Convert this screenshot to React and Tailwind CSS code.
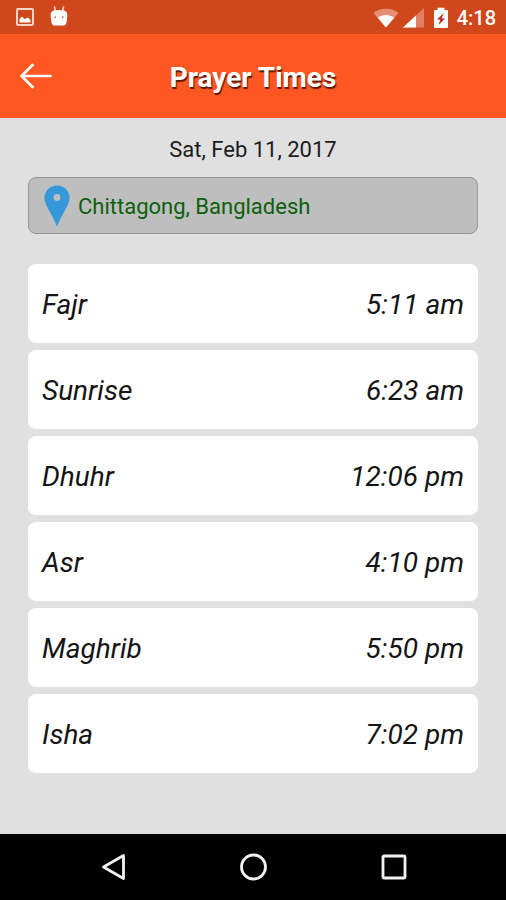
import React from "react";

const prayers = [
  { name: "Fajr", time: "5:11 am" },
  { name: "Sunrise", time: "6:23 am" },
  { name: "Dhuhr", time: "12:06 pm" },
  { name: "Asr", time: "4:10 pm" },
  { name: "Maghrib", time: "5:50 pm" },
  { name: "Isha", time: "7:02 pm" },
];

function StatusBar() {
  return (
    <div className="h-[34px] pl-4 pr-2.5 flex items-center justify-between bg-[#d0471c] text-white">
      {/* Notifications */}
      <div className="flex items-center gap-4">
        <svg width="18" height="18" viewBox="0 0 18 18" fill="none">
          <rect x="1" y="1" width="16" height="16" rx="1" stroke="#fbd5c8" strokeWidth="2" />
          <path d="M3.5 14.5V11L6 8.5L8.5 11L12 9.5L14.5 12V14.5Z" fill="white" />
        </svg>
        <svg width="18" height="22" viewBox="0 0 18 22" fill="none">
          <path d="M4.5 1L5.5 5M13.5 1L12.5 5" stroke="#fbd5c8" strokeWidth="1.6" strokeLinecap="round" />
          <path
            d="M4 4.5C7 3.8 11 3.8 14 4.5C16.5 5 17.6 7 17.3 10L16.6 16C16.4 18.5 15 19.6 12.5 19.6H5.5C3 19.6 1.6 18.5 1.4 16L0.7 10C0.4 7 1.5 5 4 4.5Z"
            fill="white"
          />
          <circle cx="5.2" cy="11.2" r="0.9" fill="#d0674a" />
          <circle cx="12.8" cy="11.2" r="0.9" fill="#d0674a" />
        </svg>
      </div>

      {/* Signal, battery and clock */}
      <div className="flex items-center pt-0.5">
        <svg width="26" height="20" viewBox="0 0 26 20">
          <path d="M0.5 5C7.5 -0.6 18.5 -0.6 25.5 5L13 19.5Z" fill="#e58f76" />
          <path d="M4.8 9.8C9.5 6 16.5 6 21.2 9.8L13 19.5Z" fill="white" />
        </svg>
        <svg width="22" height="20" viewBox="0 0 22 20" className="ml-1">
          <path d="M0 19.5L21 0V19.5Z" fill="#e07f63" />
          <path d="M0 19.5L13 7.5V19.5Z" fill="white" />
        </svg>
        <svg width="16" height="22" viewBox="0 0 16 22" className="ml-2">
          <path d="M4.5 0.8H11.5V3H14Q15 3 15 4V20Q15 21 14 21H2Q1 21 1 20V4Q1 3 2 3H4.5Z" fill="white" />
          <path d="M10.8 6L4 12.2L7.4 12.8L5.4 18L12 11.8L8.7 11.2Z" fill="#b9302a" />
        </svg>
        <span className="ml-2 text-[20px] leading-6 font-medium">4:18</span>
      </div>
    </div>
  );
}

function Header() {
  return (
    <header className="h-[84px] px-5 grid grid-cols-[32px_1fr_32px] items-center bg-[#ff5722]">
      <button type="button" aria-label="Back">
        <svg width="32" height="26" viewBox="0 0 32 26" fill="none">
          <path
            d="M30.5 13H2M12.5 2L1.5 13L12.5 24"
            stroke="white"
            strokeWidth="2.6"
            strokeLinecap="round"
            strokeLinejoin="round"
          />
        </svg>
      </button>
      <h1 className="pt-1 text-center text-[28px] leading-8 font-bold text-white [text-shadow:1px_2px_1px_#5a1a08]">
        Prayer Times
      </h1>
    </header>
  );
}

function NavBar() {
  return (
    <nav className="h-[66px] px-[43px] grid grid-cols-3 bg-black">
      <button type="button" aria-label="Back" className="flex items-center justify-center">
        <svg width="26" height="30" viewBox="0 0 26 30" fill="none">
          <path d="M23.5 3.5V26.5L3.5 15Z" stroke="#f2f2f2" strokeWidth="2.8" strokeLinejoin="round" />
        </svg>
      </button>
      <button type="button" aria-label="Home" className="flex items-center justify-center">
        <svg width="28" height="28" viewBox="0 0 28 28" fill="none">
          <circle cx="14.5" cy="14" r="12" stroke="#f2f2f2" strokeWidth="2.8" />
        </svg>
      </button>
      <button type="button" aria-label="Recent apps" className="flex items-center justify-center">
        <svg width="28" height="26" viewBox="0 0 28 26" fill="none">
          <rect x="4" y="2" width="22" height="22" rx="1" stroke="#f2f2f2" strokeWidth="2.8" />
        </svg>
      </button>
    </nav>
  );
}

export default function App() {
  return (
    <div className="min-h-screen flex flex-col bg-[#e0e0e0] font-[Roboto,sans-serif]">
      <StatusBar />
      <Header />

      <main className="flex-1 px-7 pt-[18px]">
        <p className="text-center text-[22px] leading-7 text-[#1c1c1c]">Sat, Feb 11, 2017</p>

        {/* Location */}
        <button
          type="button"
          className="mt-[13px] w-full h-[57px] px-[15px] flex items-center gap-2 rounded-lg border border-[#959595] bg-[#bebebe] text-[22px] leading-7 text-[#0b600b]"
        >
          <svg width="26" height="42" viewBox="0 0 26 42">
            <path
              fillRule="evenodd"
              d="M13 0.5C20 0.5 25.5 5.8 25.5 12.8C25.5 20 19 27 13 41.5C7 27 0.5 20 0.5 12.8C0.5 5.8 6 0.5 13 0.5ZM13 9A3.4 3.4 0 1 0 13 15.8A3.4 3.4 0 1 0 13 9Z"
              fill="#3498db"
            />
          </svg>
          <span className="pt-0.5">Chittagong, Bangladesh</span>
        </button>

        {/* Times */}
        <ul className="mt-[30px] flex flex-col gap-[7px]">
          {prayers.map((prayer) => (
            <li
              key={prayer.name}
              className="h-[79px] px-3.5 pt-0.5 flex items-center justify-between rounded-lg bg-white text-[28px] leading-8 italic text-[#141414]"
            >
              <span>{prayer.name}</span>
              <span>{prayer.time}</span>
            </li>
          ))}
        </ul>
      </main>

      <NavBar />
    </div>
  );
}
